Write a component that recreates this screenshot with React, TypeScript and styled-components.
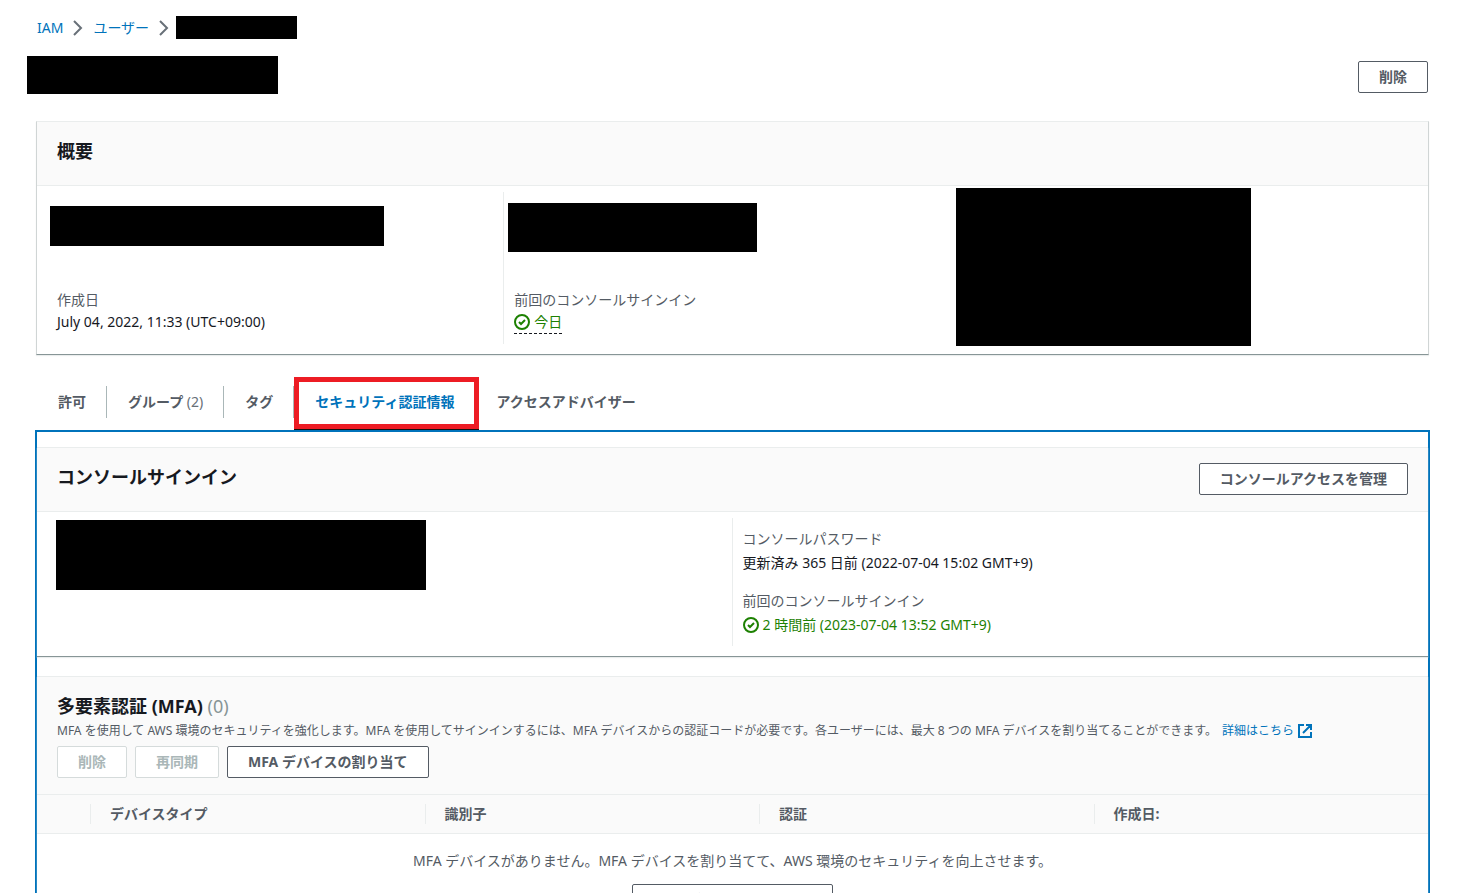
import React from "react";
import styled, { createGlobalStyle } from "styled-components";

const color = {
  text: "#16191f",
  secondary: "#545b64",
  muted: "#687078",
  disabled: "#aab7b8",
  disabledBorder: "#d5dbdb",
  line: "#eaeded",
  headerBg: "#fafafa",
  link: "#0073bb",
  success: "#1d8102",
};

const GlobalStyle = createGlobalStyle`
  *, *::before, *::after { box-sizing: border-box; }
  html { scrollbar-width: none; }
  body {
    margin: 0;
    background: #fff;
    color: ${color.text};
    font-family: "Noto Sans", "Noto Sans CJK JP", sans-serif;
    font-size: 14px;
    line-height: 22px;
  }
  h2, dl, dd, p, ol { margin: 0; padding: 0; }
`;

const Page = styled.main`
  height: 100vh;
  overflow: hidden;
  padding: 16px 30px 0 36px;
`;

const Breadcrumbs = styled.ol`
  display: flex;
  align-items: center;
  height: 23px;
  margin-left: 1px;
  list-style: none;
`;

const Crumb = styled.li`
  display: flex;
  align-items: center;
`;

const Link = styled.a`
  color: ${color.link};
  text-decoration: none;
`;

const ChevronIcon = styled.svg`
  width: 16px;
  height: 16px;
  margin: 0 7px;
  fill: none;
  stroke: ${color.muted};
  stroke-width: 2;
`;

const Redaction = styled.div<{ $w: number; $h: number; $top?: number; $left?: number }>`
  flex: none;
  width: ${(p) => p.$w}px;
  height: ${(p) => p.$h}px;
  margin: ${(p) => p.$top ?? 0}px 0 0 ${(p) => p.$left ?? 0}px;
  background: #000;
`;

const TitleRow = styled.header`
  display: flex;
  justify-content: space-between;
  align-items: flex-start;
  margin: 17px 1px 27px -9px;
`;

const Button = styled.button`
  height: 32px;
  padding: 0 20px;
  border: 1px solid ${color.secondary};
  border-radius: 2px;
  background: #fff;
  color: ${color.secondary};
  font: inherit;
  font-weight: 700;
  white-space: nowrap;

  &:disabled {
    border-color: ${color.disabledBorder};
    color: ${color.disabled};
  }
`;

const TitleAction = styled.div`
  padding-top: 5px;
`;

const Card = styled.section<{ $framed?: boolean }>`
  border: 1px solid #d0d5d5;
  border-width: ${(p) => (p.$framed ? "1px" : "1px 0")};
  border-top-color: ${color.line};
  border-bottom-color: #879596;
  box-shadow: 0 1px 1px ${color.line};
`;

const CardHeader = styled.div`
  display: flex;
  justify-content: space-between;
  align-items: flex-start;
  min-height: 64px;
  padding: 15px 20px;
  border-bottom: 1px solid ${color.line};
  background: ${color.headerBg};
`;

const Heading = styled.h2`
  font-size: 18px;
  font-weight: 700;
  line-height: 28px;
`;

const Counter = styled.span`
  color: #879596;
  font-weight: 400;
`;

const Columns = styled.div<{ $count: number }>`
  display: grid;
  grid-template-columns: repeat(${(p) => p.$count}, 1fr);
  padding: 6px 12px 10px 10px;
`;

const Column = styled.div`
  padding: 0 10px;

  & + & {
    border-left: 1px solid ${color.line};
  }
`;

const RedactedColumn = styled.div`
  height: 152px;
`;

const RedactedSlot = styled.div`
  display: flex;
  align-items: flex-start;
  height: 97px;
`;

const Facts = styled.dl<{ $roomy?: boolean }>`
  padding: ${(p) => (p.$roomy ? "9px 0" : "0 0 10px")};
  line-height: ${(p) => (p.$roomy ? 24 : 22)}px;
`;

const Label = styled.dt`
  color: ${color.secondary};

  dd + & {
    margin-top: 14px;
  }
`;

const Value = styled.dd`
  display: flex;
`;

const Success = styled.span<{ $dashed?: boolean }>`
  display: inline-flex;
  align-items: center;
  gap: 4px;
  color: ${color.success};
  border-bottom: ${(p) => (p.$dashed ? `1px dashed ${color.text}` : "0")};
`;

const StatusSvg = styled.svg`
  width: 16px;
  height: 16px;
  fill: none;
  stroke: currentColor;
  stroke-width: 2;
`;

const Tabs = styled.div`
  display: flex;
  align-items: center;
  height: 75px;
  padding: 18px 0 0 1px;
`;

const Tab = styled.button<{ $active?: boolean }>`
  position: relative;
  height: 32px;
  padding: 0 20px 0 21px;
  border: 0;
  border-right: 1px solid ${color.disabled};
  background: none;
  color: ${(p) => (p.$active ? color.link : color.secondary)};
  font: inherit;
  font-weight: 700;
  white-space: nowrap;

  &:last-child {
    border-right: 0;
  }
`;

const TabCount = styled.span`
  color: ${color.muted};
  font-weight: 400;
`;

const Highlight = styled.span`
  position: absolute;
  inset: -9px -5px -11px 0;
  border: 5px solid #ed1c24;
  box-shadow: 0 1px 0 #111;
  pointer-events: none;
`;

const TabPanel = styled.div`
  display: flex;
  flex-direction: column;
  gap: 19px;
  margin: 0 -1px;
  padding-top: 15px;
  border: 2px solid ${color.link};
  border-bottom: 0;
`;

const MfaHeader = styled.div`
  padding: 15px 20px 16px;
  border-bottom: 1px solid ${color.line};
  background: ${color.headerBg};
`;

const Description = styled.p`
  color: ${color.secondary};
  font-size: 12px;
  line-height: 22px;
  white-space: nowrap;
`;

const MoreLink = styled(Link)`
  margin-left: 5px;
`;

const ExternalSvg = styled.svg`
  width: 14px;
  height: 14px;
  margin-left: 4px;
  vertical-align: -3px;
  fill: none;
  stroke: currentColor;
  stroke-width: 2;
`;

const ButtonRow = styled.div`
  display: flex;
  gap: 8px;
  padding-top: 4px;
`;

const Table = styled.table`
  width: 100%;
  border-collapse: separate;
  border-spacing: 0;
  table-layout: fixed;
`;

const HeadCell = styled.th<{ $select?: boolean }>`
  width: ${(p) => (p.$select ? "53px" : "auto")};
  height: 39px;
  padding: 0;
  border-bottom: 1px solid ${color.line};
  background: ${color.headerBg};
  color: ${color.secondary};
  text-align: left;
`;

const HeadLabel = styled.div`
  height: 20px;
  padding-left: 19px;
  border-left: 1px solid ${color.line};
  line-height: 20px;
`;

const EmptyCell = styled.td`
  padding: 16px 20px;
  color: ${color.secondary};
  text-align: center;
`;

const EmptyText = styled.p`
  padding-bottom: 12px;
`;

const Chevron = () => (
  <ChevronIcon viewBox="0 0 16 16" aria-hidden="true">
    <path d="M4 1l7 7-7 7" />
  </ChevronIcon>
);

const StatusIcon = () => (
  <StatusSvg viewBox="0 0 16 16" aria-hidden="true">
    <circle cx="8" cy="8" r="7" />
    <path d="M5 8l2 2 4-4" />
  </StatusSvg>
);

const ExternalIcon = () => (
  <ExternalSvg viewBox="0 0 14 14" aria-hidden="true">
    <path d="M6 1H1v12h12V8M8 1h5v5M13 1L5 9" />
  </ExternalSvg>
);

const tabs = [
  { label: "許可" },
  { label: "グループ", count: 2 },
  { label: "タグ" },
  { label: "セキュリティ認証情報", active: true },
  { label: "アクセスアドバイザー" },
];

const deviceColumns = ["デバイスタイプ", "識別子", "認証", "作成日:"];

export default function App() {
  return (
    <Page lang="ja">
      <GlobalStyle />
      <nav>
        <Breadcrumbs>
          <Crumb>
            <Link href="#iam">IAM</Link>
            <Chevron />
          </Crumb>
          <Crumb>
            <Link href="#users">ユーザー</Link>
            <Chevron />
          </Crumb>
          <Crumb>
            <Redaction $w={121} $h={23} $left={-3} />
          </Crumb>
        </Breadcrumbs>
      </nav>

      <TitleRow>
        <Redaction $w={251} $h={38} />
        <TitleAction>
          <Button type="button">削除</Button>
        </TitleAction>
      </TitleRow>

      <Card $framed>
        <CardHeader>
          <Heading>概要</Heading>
        </CardHeader>
        <Columns $count={3}>
          <Column>
            <RedactedSlot>
              <Redaction $w={334} $h={40} $top={14} $left={-7} />
            </RedactedSlot>
            <Facts>
              <Label>作成日</Label>
              <Value>July 04, 2022, 11:33 (UTC+09:00)</Value>
            </Facts>
          </Column>
          <Column>
            <RedactedSlot>
              <Redaction $w={249} $h={49} $top={11} $left={-6} />
            </RedactedSlot>
            <Facts>
              <Label>前回のコンソールサインイン</Label>
              <Value>
                <Success $dashed>
                  <StatusIcon />
                  今日
                </Success>
              </Value>
            </Facts>
          </Column>
          <RedactedColumn>
            <Redaction $w={295} $h={158} $top={-4} $left={-4} />
          </RedactedColumn>
        </Columns>
      </Card>

      <Tabs role="tablist">
        {tabs.map((tab) => (
          <Tab key={tab.label} type="button" role="tab" aria-selected={!!tab.active} $active={tab.active}>
            {tab.label}
            {tab.count !== undefined && <TabCount> ({tab.count})</TabCount>}
            {tab.active && <Highlight />}
          </Tab>
        ))}
      </Tabs>

      <TabPanel role="tabpanel">
        <Card>
          <CardHeader>
            <Heading>コンソールサインイン</Heading>
            <Button type="button">コンソールアクセスを管理</Button>
          </CardHeader>
          <Columns $count={2}>
            <Column>
              <Redaction $w={370} $h={70} $top={2} $left={-1} />
            </Column>
            <Column>
              <Facts $roomy>
                <Label>コンソールパスワード</Label>
                <Value>更新済み 365 日前 (2022-07-04 15:02 GMT+9)</Value>
                <Label>前回のコンソールサインイン</Label>
                <Value>
                  <Success>
                    <StatusIcon />2 時間前 (2023-07-04 13:52 GMT+9)
                  </Success>
                </Value>
              </Facts>
            </Column>
          </Columns>
        </Card>

        <Card>
          <MfaHeader>
            <Heading>
              多要素認証 (MFA) <Counter>(0)</Counter>
            </Heading>
            <Description>
              MFA を使用して AWS 環境のセキュリティを強化します。MFA を使用してサインインするには、MFA
              デバイスからの認証コードが必要です。各ユーザーには、最大 8 つの MFA
              デバイスを割り当てることができます。
              <MoreLink href="#mfa-help">
                詳細はこちら
                <ExternalIcon />
              </MoreLink>
            </Description>
            <ButtonRow>
              <Button type="button" disabled>
                削除
              </Button>
              <Button type="button" disabled>
                再同期
              </Button>
              <Button type="button">MFA デバイスの割り当て</Button>
            </ButtonRow>
          </MfaHeader>
          <Table>
            <thead>
              <tr>
                <HeadCell $select aria-label="選択" />
                {deviceColumns.map((name) => (
                  <HeadCell key={name} scope="col">
                    <HeadLabel>{name}</HeadLabel>
                  </HeadCell>
                ))}
              </tr>
            </thead>
            <tbody>
              <tr>
                <EmptyCell colSpan={5}>
                  <EmptyText>
                    MFA デバイスがありません。MFA デバイスを割り当てて、AWS 環境のセキュリティを向上させます。
                  </EmptyText>
                  <Button type="button">MFA デバイスの割り当て</Button>
                </EmptyCell>
              </tr>
            </tbody>
          </Table>
        </Card>
      </TabPanel>
    </Page>
  );
}
